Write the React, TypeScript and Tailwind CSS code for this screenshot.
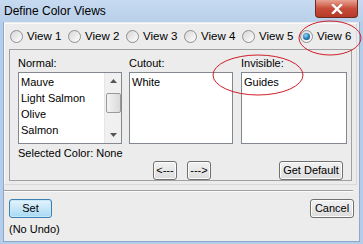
import React from "react";

const font = { fontFamily: '"Liberation Sans", Arial, sans-serif' };

function Radio({ label, checked }: { label: string; checked?: boolean }) {
  return (
    <div className="flex items-center gap-[4px] w-[58px] shrink-0 whitespace-nowrap">
      <div className="w-[13px] h-[13px] shrink-0 rounded-full border border-[#8e8f8f] bg-gradient-to-br from-[#d6d6d6] to-[#ffffff] flex items-center justify-center">
        {checked && (
          <div className="w-[7px] h-[7px] rounded-full bg-[radial-gradient(circle_at_40%_35%,#8fd8ff,#1e6fa8_60%,#0b3f66)]" />
        )}
      </div>
      <span className="text-[11.5px] text-black leading-none">{label}</span>
    </div>
  );
}

function Btn({ children, w, primary }: { children: React.ReactNode; w: string; primary?: boolean }) {
  return (
    <div
      className={
        "h-[19px] flex items-center justify-center rounded-[3px] border text-[11px] text-black whitespace-nowrap " +
        w +
        (primary
          ? " border-[#3c7fb1] bg-gradient-to-b from-[#e5f4fc] to-[#a7d9f5] shadow-[inset_0_0_0_1px_#c5e8fb]"
          : " border-[#707070] bg-gradient-to-b from-[#f2f2f2] to-[#dcdcdc] shadow-[inset_0_0_0_1px_#fcfcfc]")
      }
    >
      {children}
    </div>
  );
}

function ListBox({ children, w }: { children?: React.ReactNode; w: string }) {
  return (
    <div className={"h-[72px] bg-white border border-[#828790] relative " + w}>{children}</div>
  );
}

export default function App() {
  return (
    <div className="w-[363px] h-[244px] relative overflow-hidden bg-[#b6cde9] flex flex-col" style={font}>
      {/* title bar */}
      <div className="h-[22px] flex items-center pl-[4px] bg-gradient-to-b from-[#c6daf1] to-[#b9d0ea] relative">
        <span className="text-[12px] text-black">Define Color Views</span>
        <div className="absolute right-[5px] top-0 w-[43px] h-[18px] rounded-b-[4px] border border-[#6e2a22] border-t-0 bg-gradient-to-b from-[#e8a293] via-[#c84c3a] to-[#b63a28] flex items-center justify-center">
          <svg width="12" height="10" viewBox="0 0 12 10">
            <path d="M2 1 L10 9 M10 1 L2 9" stroke="#fff" strokeWidth="2.4" strokeLinecap="square" />
          </svg>
        </div>
      </div>
      {/* body */}
      <div className="flex-1 mx-[3px] mb-[2px] bg-[#ececec] border border-[#8aa9cf] border-t-0 flex flex-col">
        <div className="mt-[1px] mr-[2px] border border-[#d8d8d8] border-l-[#fbfbfb] border-t-[#fbfbfb] h-[162px] flex flex-col">
          <div className="h-[25px] flex items-center pl-[5px]">
            <Radio label="View 1" />
            <Radio label="View 2" />
            <Radio label="View 3" />
            <Radio label="View 4" />
            <Radio label="View 5" />
            <Radio label="View 6" checked />
          </div>
          <div className="mx-[4px] border border-[#a0a0a0] h-[132px] px-[8px] pt-[6px] flex flex-col">
            <div className="flex gap-[7px]">
              <div className="flex flex-col">
                <span className="text-[11px] leading-[14px] h-[16px]">Normal:</span>
                <ListBox w="w-[104px]">
                  <div className="text-[11px] leading-[16px] pl-[2px] pt-[1px]">
                    <div>Mauve</div>
                    <div>Light Salmon</div>
                    <div>Olive</div>
                    <div>Salmon</div>
                  </div>
                  <div className="absolute right-0 top-0 bottom-0 w-[17px] bg-[#f0f0f0] border-l border-[#e6e6e6] flex flex-col items-center">
                    <div className="h-[16px] flex items-center justify-center">
                      <svg width="7" height="4" viewBox="0 0 7 4"><path d="M0 4 L3.5 0 L7 4Z" fill="#555" /></svg>
                    </div>
                    <div className="flex-1" />
                    <div className="w-[15px] h-[20px] mb-[14px] rounded-[2px] border border-[#9a9a9a] bg-gradient-to-r from-[#f3f3f3] to-[#dadada]" />
                    <div className="h-[16px] flex items-center justify-center">
                      <svg width="7" height="4" viewBox="0 0 7 4"><path d="M0 0 L3.5 4 L7 0Z" fill="#555" /></svg>
                    </div>
                  </div>
                </ListBox>
              </div>
              <div className="flex flex-col">
                <span className="text-[11px] leading-[14px] h-[16px]">Cutout:</span>
                <ListBox w="w-[104px]">
                  <div className="text-[11px] leading-[16px] pl-[2px] pt-[1px]">White</div>
                </ListBox>
              </div>
              <div className="flex flex-col ml-[1px]">
                <span className="text-[11px] leading-[14px] h-[16px]">Invisible:</span>
                <ListBox w="w-[106px]">
                  <div className="text-[11px] leading-[16px] pl-[2px] pt-[1px]">Guides</div>
                </ListBox>
              </div>
            </div>
            <div className="text-[11px] leading-[14px] mt-[2px]">Selected Color: None</div>
            <div className="flex items-center mt-[1px]">
              <div className="w-[135px]" />
              <Btn w="w-[24px]">&lt;---</Btn>
              <div className="w-[10px]" />
              <Btn w="w-[24px]">---&gt;</Btn>
              <div className="flex-1" />
              <Btn w="w-[64px]">Get Default</Btn>
            </div>
          </div>
        </div>
        <div className="mt-[5px] mr-[6px] h-[2px] border-t border-[#a0a0a0] border-b border-b-[#fbfbfb]" />
        <div className="mt-[7px] px-[5px] flex justify-between items-center">
          <Btn w="w-[43px]" primary>Set</Btn>
          <Btn w="w-[44px]">Cancel</Btn>
        </div>
        <div className="text-[11px] leading-[14px] pl-[5px] mt-[4px]">(No Undo)</div>
      </div>
      {/* annotation ellipses */}
      <svg className="absolute left-0 top-0 pointer-events-none" width="363" height="244">
        <ellipse cx="330" cy="38" rx="31" ry="17" fill="none" stroke="#d01e28" strokeWidth="1" />
        <ellipse cx="258" cy="75" rx="45" ry="20" fill="none" stroke="#d01e28" strokeWidth="1" />
      </svg>
    </div>
  );
}
